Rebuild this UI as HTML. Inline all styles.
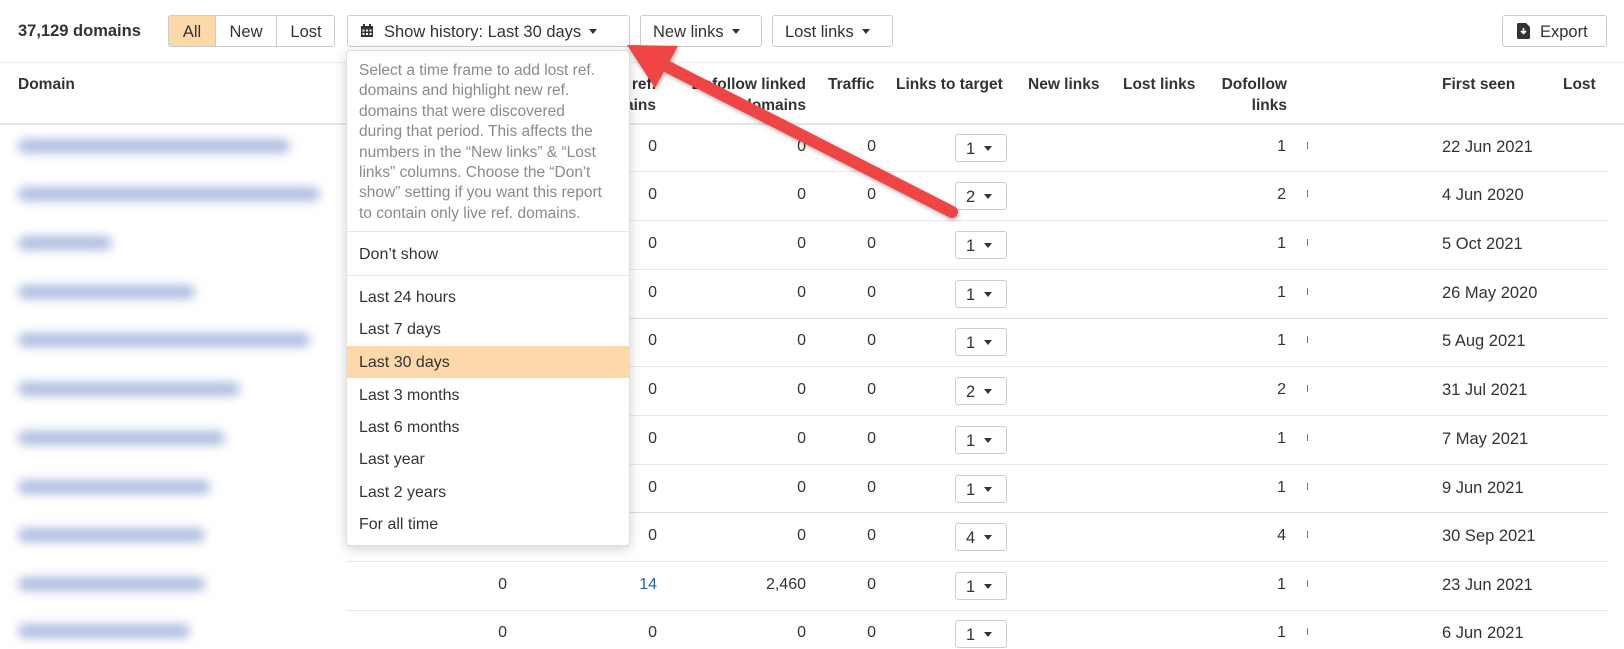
<!DOCTYPE html>
<html><head><meta charset="utf-8"><style>
*{box-sizing:border-box;margin:0;padding:0}
body{width:1624px;height:631px;overflow:hidden;background:#fff;font-family:"Liberation Sans",Arial,sans-serif;color:#333;font-size:16px;position:relative}
.a{position:absolute;white-space:nowrap}
.btn{position:absolute;top:15px;height:32px;border:1px solid #ccc;border-radius:3px;background:#fff;line-height:32px;font-size:16.5px;color:#333;padding-left:12px}
.car{display:inline-block;width:0;height:0;border-left:4.5px solid transparent;border-right:4.5px solid transparent;border-top:5px solid #333;vertical-align:middle;margin-left:8px;margin-top:-2px}
.h{position:absolute;font-weight:bold;font-size:15.5px;line-height:21px;top:74px}
.r{text-align:right}
.line{position:absolute;height:1px;background:#e8e8e8;left:346px;width:1262px}
.blur{position:absolute;left:18px;height:14px;background:#aebde0;filter:blur(5px);border-radius:7px}
.v{position:absolute;text-align:right;font-size:16px}
.sel{position:absolute;left:955px;width:52px;height:28px;border:1px solid #ccc;border-radius:3px;line-height:28px;padding-left:10px;font-size:16.5px}
.sel .car{margin-left:9px}
.tick{position:absolute;left:1307px;width:1px;height:7px;background:#4a7cb8}
.dd{position:absolute;left:346px;top:50px;width:284px;height:496px;background:#fff;border:1px solid #ddd;border-radius:4px;box-shadow:0 3px 12px rgba(0,0,0,.18)}
.it{position:absolute;left:12px;font-size:16px}
</style></head><body>
<div class="a" style="left:18px;top:22px;font-weight:bold;font-size:16.5px">37,129 domains</div>
<div class="a" style="left:168px;top:15px;width:167px;height:32px;border:1px solid #ccc;border-radius:3px;overflow:hidden;font-size:16.5px;line-height:32px">
<div class="a" style="left:0;top:0;width:46px;height:30px;background:#fdd9aa;text-align:center">All</div>
<div class="a" style="left:46px;top:0;width:61px;height:30px;border-left:1px solid #ccc;text-align:center">New</div>
<div class="a" style="left:107px;top:0;width:59px;height:30px;border-left:1px solid #ccc;text-align:center">Lost</div>
</div>
<div class="btn" style="left:347px;width:283px"><svg width="14" height="14" viewBox="0 0 14 14" style="vertical-align:-1px;margin-right:10px"><rect x="1" y="2" width="12" height="11" fill="#333"/><rect x="3" y="0" width="2" height="3" fill="#333"/><rect x="9" y="0" width="2" height="3" fill="#333"/><g fill="#fff"><rect x="2.5" y="5.5" width="2" height="2"/><rect x="6" y="5.5" width="2" height="2"/><rect x="9.5" y="5.5" width="2" height="2"/><rect x="2.5" y="9" width="2" height="2"/><rect x="6" y="9" width="2" height="2"/><rect x="9.5" y="9" width="2" height="2"/></g></svg>Show history: Last 30 days<span class="car"></span></div>
<div class="btn" style="left:640px;width:122px">New links<span class="car"></span></div>
<div class="btn" style="left:772px;width:121px">Lost links<span class="car"></span></div>
<div class="btn" style="left:1502px;width:105px;padding-left:14px"><svg width="13" height="16" viewBox="0 0 13 16" style="vertical-align:-2px;margin-right:10px"><path d="M0 1.5Q0 0 1.5 0H9L13 4V14.5Q13 16 11.5 16H1.5Q0 16 0 14.5Z" fill="#333"/><path d="M6.5 5V10M4 8L6.5 10.5L9 8" stroke="#fff" stroke-width="1.6" fill="none"/></svg>Export</div>

<div class="a" style="left:0;top:62px;width:1624px;height:1px;background:#ececec"></div>
<div class="h" style="left:18px">Domain</div>
<div class="h r" style="left:560px;width:96px">ref.<br>domains</div>
<div class="h r" style="left:670px;width:136px">Dofollow linked<br>domains</div>
<div class="h" style="left:828px">Traffic</div>
<div class="h" style="left:896px">Links to target</div>
<div class="h" style="left:1028px">New links</div>
<div class="h" style="left:1123px">Lost links</div>
<div class="h r" style="left:1200px;width:87px">Dofollow<br>links</div>
<div class="h" style="left:1442px">First seen</div>
<div class="h" style="left:1563px">Lost</div>
<div class="a" style="left:0;top:123px;width:1624px;height:2px;background:#e6e6e6"></div>

<div class="line" style="top:171px"></div><div class="line" style="top:220px"></div><div class="line" style="top:269px"></div><div class="line" style="top:318px;background:#ddd"></div><div class="line" style="top:366px"></div><div class="line" style="top:415px"></div><div class="line" style="top:464px"></div><div class="line" style="top:512px;background:#ddd"></div><div class="line" style="top:561px"></div><div class="line" style="top:610px"></div>

<div class="blur" style="top:139px;width:272px"></div>
<div class="blur" style="top:187px;width:302px"></div>
<div class="blur" style="top:236px;width:94px"></div>
<div class="blur" style="top:285px;width:177px"></div>
<div class="blur" style="top:333px;width:292px"></div>
<div class="blur" style="top:382px;width:222px"></div>
<div class="blur" style="top:431px;width:207px"></div>
<div class="blur" style="top:480px;width:192px"></div>
<div class="blur" style="top:528px;width:187px"></div>
<div class="blur" style="top:577px;width:187px"></div>
<div class="blur" style="top:624px;width:172px"></div>

<div id="rows"></div>
<script>
var ys=[146,194,243,292,340,389,438,487,535,584,632];
var sel=[1,2,1,1,1,2,1,1,4,1,1];
var dl=[1,2,1,1,1,2,1,1,4,1,1];
var fs=["22 Jun 2021","4 Jun 2020","5 Oct 2021","26 May 2020","5 Aug 2021","31 Jul 2021","7 May 2021","9 Jun 2021","30 Sep 2021","23 Jun 2021","6 Jun 2021"];
var h="";
for(var i=0;i<11;i++){var t=ys[i]-8;
if(i>=9)h+='<div class="v" style="left:400px;width:107px;top:'+t+'px">0</div>';
h+='<div class="v" style="left:560px;width:97px;top:'+t+'px;'+(i==9?'color:#2b63b0':'')+'">'+(i==9?'14':'0')+'</div>';
h+='<div class="v" style="left:700px;width:106px;top:'+t+'px">'+(i==9?'2,460':'0')+'</div>';
h+='<div class="v" style="left:820px;width:56px;top:'+t+'px">0</div>';
h+='<div class="sel" style="top:'+(ys[i]-12)+'px">'+sel[i]+'<span class="car"></span></div>';
h+='<div class="v" style="left:1200px;width:86px;top:'+t+'px">'+dl[i]+'</div>';
h+='<div class="tick" style="top:'+(ys[i]-4)+'px"></div>';
h+='<div class="a" style="left:1442px;top:'+t+'px;font-size:16.5px">'+fs[i]+'</div>';}
document.getElementById("rows").innerHTML=h;
</script>

<div class="dd">
<div class="a" style="left:12px;top:10px;font-size:15.5px;line-height:20.4px;color:#8a8a8a">Select a time frame to add lost ref.<br>domains and highlight new ref.<br>domains that were discovered<br>during that period. This affects the<br>numbers in the “New links” &amp; “Lost<br>links” columns. Choose the “Don't<br>show” setting if you want this report<br>to contain only live ref. domains.</div>
<div class="a" style="left:0;top:180px;width:282px;height:1px;background:#e5e5e5"></div>
<div class="it" style="top:195px">Don’t show</div>
<div class="a" style="left:0;top:224px;width:282px;height:1px;background:#e5e5e5"></div>
<div class="it" style="top:238px">Last 24 hours</div>
<div class="it" style="top:270px">Last 7 days</div>
<div class="a" style="left:0;top:295px;width:282px;height:32px;background:#fdd9aa"></div>
<div class="it" style="top:303px">Last 30 days</div>
<div class="it" style="top:336px">Last 3 months</div>
<div class="it" style="top:368px">Last 6 months</div>
<div class="it" style="top:400px">Last year</div>
<div class="it" style="top:433px">Last 2 years</div>
<div class="it" style="top:465px">For all time</div>
</div>

<svg class="a" style="left:0;top:0" width="1624" height="631">
<defs><filter id="s" x="-10%" y="-10%" width="120%" height="120%"><feDropShadow dx="1" dy="2" stdDeviation="2" flood-opacity=".3"/></filter></defs>
<g filter="url(#s)" fill="#ef4444">
<line x1="952" y1="212" x2="662" y2="64" stroke="#ef4444" stroke-width="12" stroke-linecap="round"/>
<polygon points="627,45 678,46 655,88"/>
</g>
</svg>
</body></html>
